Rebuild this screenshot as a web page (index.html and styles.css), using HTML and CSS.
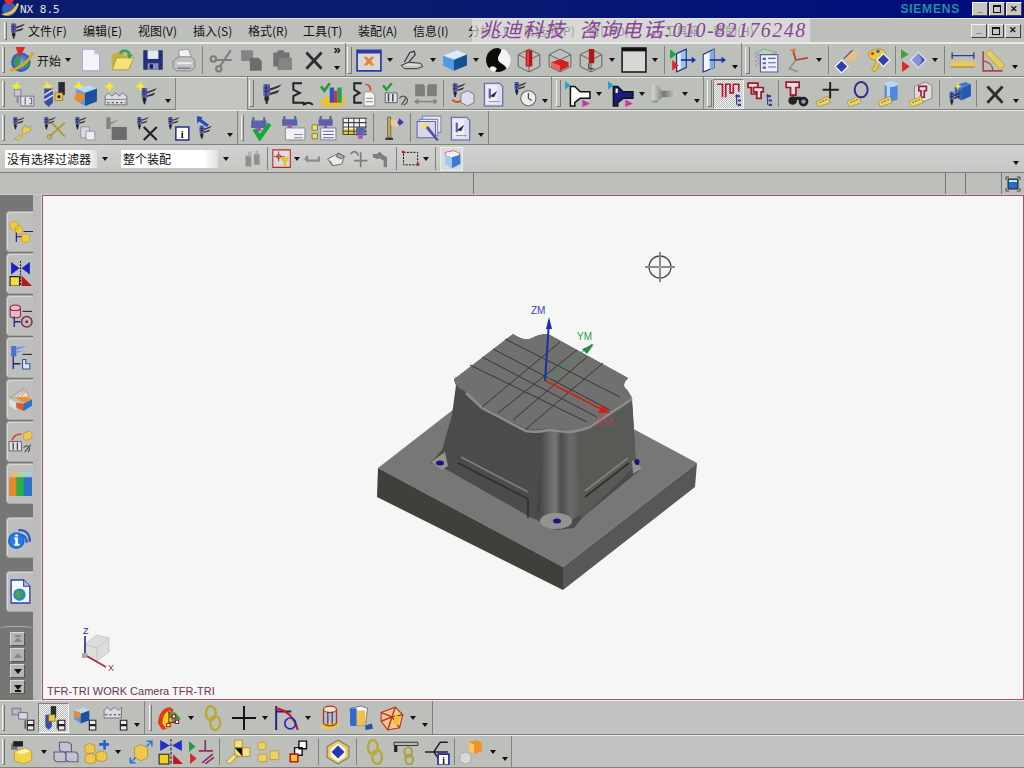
FILE: index.html
```html
<!DOCTYPE html>
<html lang="zh">
<head>
<meta charset="utf-8">
<title>NX 8.5</title>
<link rel="stylesheet" href="styles.css">
</head>
<body>
<svg class="defs" aria-hidden="true">
<defs>
<filter id="soft" x="-5%" y="-5%" width="110%" height="110%"><feGaussianBlur stdDeviation=".55"/></filter>
<linearGradient id="gCorner" x1="0" x2="1" y1="0" y2="0"><stop offset="0" stop-color="#3c3d3a"/><stop offset=".22" stop-color="#5d5e5b"/><stop offset=".42" stop-color="#777875"/><stop offset=".56" stop-color="#4c4d4a"/><stop offset=".78" stop-color="#6a6b68"/><stop offset="1" stop-color="#5a5b58"/></linearGradient>
<linearGradient id="gNav" x1="0" x2="1" y1="0" y2="0"><stop offset="0" stop-color="#d8d8d8"/><stop offset=".5" stop-color="#777"/><stop offset="1" stop-color="#ccc"/></linearGradient>
<radialGradient id="gGlobe"><stop offset="0" stop-color="#7ab0ee"/><stop offset="1" stop-color="#1e58b8"/></radialGradient>

<symbol id="tool" viewBox="0 0 24 24"><path fill="#5a62ac" d="M5 3h6v11H5z"/><path fill="#2c2f6a" d="M7 3h1v11H7zM5 6h6v1H5zM5 9h6v1H5z"/><path fill="#222" d="M6 14h4v4H6zM7 18h2v3H7z"/><path fill="#333" d="M11 7l11-4-3 3-8 3zM11 11l9-3-2 3-7 2z"/></symbol>
<symbol id="star" viewBox="0 0 24 24"><path fill="#f2ea3c" d="M6 0l1.500 3.500L11 5 7.500 6.500 6 10 4.500 6.500 1 5l3.500-1.500z"/></symbol>

<symbol id="start" viewBox="0 0 24 24"><circle cx="11" cy="14" r="9" fill="url(#gGlobe)"/><path fill="#3f9a3e" d="M5 11l5-2 1 4-3 5-3-3zM14 15l4-2 1 3-3 4z"/><path fill="none" stroke="#e8a020" stroke-width="2.500" d="M1 21C6 22 19 14 22 5"/><path fill="#e02a2a" d="M6 0h9l-5 10z"/></symbol>
<symbol id="new" viewBox="0 0 24 24"><path fill="#f4f2fb" stroke="#a8a8d8" d="M4 2h11l5 5v15H4z"/><path fill="#c8c8ea" d="M15 2l5 5h-5z"/></symbol>
<symbol id="open" viewBox="0 0 24 24"><path fill="#c8b040" d="M2 8l5-3h7v3l6 1v11H3z"/><path fill="#f4e27a" stroke="#a49030" stroke-width=".7" d="M3 21l4-11h16l-5 11z"/><path fill="none" stroke="#3ea24a" stroke-width="2.500" d="M10 6c3-4 8-3 9 1"/><path fill="#3ea24a" d="M16 7h6l-3 4z"/></symbol>
<symbol id="save" viewBox="0 0 24 24"><path fill="#24307e" d="M3 3h18v18H3z"/><path fill="#e8e8f0" d="M7 3h10v8H7z"/><path fill="#8890b0" d="M7 15h10v6H7z"/><path fill="#111a60" d="M9 16h3v4H9z"/></symbol>
<symbol id="print" viewBox="0 0 24 24"><path fill="#f2f2f2" stroke="#888" stroke-width=".7" d="M7 3l9-1 3 8H8z"/><path fill="#c0c0c4" stroke="#777" stroke-width=".7" d="M2 13l5-4h12l3 4v6l-4 3H5l-3-3z"/><path fill="#eee" d="M6 16h12l2-2H5z"/><path fill="#666" d="M6 19h12v1H6z"/></symbol>
<symbol id="cut" viewBox="0 0 24 24"><g fill="none" stroke="#7d7d7d" stroke-width="2"><circle cx="5" cy="11" r="2.500"/><circle cx="10" cy="20" r="2.500"/><path d="M7 12l15 0M11 18L21 3"/></g></symbol>
<symbol id="copy" viewBox="0 0 24 24"><path fill="#848484" d="M2 3h11v7h-2v3H2z"/><path fill="#6c6c6c" d="M10 10h8l3 3v9H10z"/></symbol>
<symbol id="paste" viewBox="0 0 24 24"><path fill="#727272" d="M3 5h4V3h6v2h5v5h2v11H7v-3H3z"/><path fill="#848484" d="M8 10h12v11H8z"/></symbol>
<symbol id="x" viewBox="0 0 24 24"><path fill="none" stroke="#2e2e2e" stroke-width="2.600" d="M5 5l14 15M19 5L5 20"/></symbol>
<symbol id="fit" viewBox="0 0 24 24"><path fill="#d8d8d4" stroke="#2a3ca8" stroke-width="1.600" d="M1 3h22v19H1z"/><path fill="#2a3ca8" d="M1 3h22v3H1z"/><path fill="#e6823a" d="M7 9l3 0 2 2 2-2h3l-3 4 3 4h-3l-2-2-2 2H7l3-4z"/></symbol>
<symbol id="pan" viewBox="0 0 24 24"><path fill="#c4c4c4" stroke="#333" stroke-width=".9" d="M2 17l7-3 11 1 2 3-5 2H5z"/><path fill="none" stroke="#333" stroke-width="1.100" d="M5 14L10 5l4-1 1 3-6 7"/><path fill="#f0f0f0" d="M6 16h12v1H6z"/></symbol>
<symbol id="cube" viewBox="0 0 24 24"><path fill="#d8ecfb" d="M1 8l13-5 9 4-12 4z"/><path fill="#4d9ae6" d="M1 8l10 4v10L1 17z"/><path fill="#15508f" d="M11 12l12-5v10l-12 5z"/></symbol>
<symbol id="disc" viewBox="0 0 24 24"><circle cx="12" cy="12" r="11" fill="#0c0c0c"/><path fill="#f4f4f4" d="M12 1a11 11 0 0 1 8 19c-2-5-8-5-8-9 0-4 3-5 3-9zM4 20c2-4 5-2 7 0l-2 3c-2-.5-4-1.500-5-3z"/></symbol>
<symbol id="wire" viewBox="0 0 24 24"><g fill="none" stroke="#555" stroke-width=".8"><path d="M2 7l10-5 10 5v11l-10 5-10-5z"/><path d="M2 7l10 5 10-5M12 12v11"/></g></symbol>
<symbol id="w1" viewBox="0 0 24 24"><use href="#wire"/><path fill="#b01818" d="M9 3h6v15h-6z"/><path fill="#e84040" d="M10 4h2v13h-2z"/></symbol>
<symbol id="w2" viewBox="0 0 24 24"><use href="#wire"/><path fill="#d42020" d="M4 14l8-3 8 3v4l-8 4-8-4z"/><path fill="#f06060" d="M4 14l8 3v5l-8-4z"/></symbol>
<symbol id="w3" viewBox="0 0 24 24"><use href="#wire"/><path fill="#b01818" d="M10 2h5v13h-5z"/><path fill="none" stroke="#333" d="M10 15v5h5"/></symbol>
<symbol id="bgr" viewBox="0 0 24 24"><path fill="#d8d8d4" stroke="#111" stroke-width="1.400" d="M1 1h22v22H1z"/><path fill="#111" d="M1 1h22v3H1z"/></symbol>
<symbol id="vA" viewBox="0 0 24 24"><path fill="#9cc4f0" stroke="#1a2c80" d="M6 6l9-4v17l-9 4z"/><path fill="#e4effb" d="M7 7l3-1.500V20l-3 1.500z"/><path fill="#26a040" d="M0 2l6 5-6 4z"/><path fill="#d82a2a" d="M2 12l6 5-6 5z"/><path fill="none" stroke="#1a2cb0" stroke-width="1.500" d="M10 12h11"/><path fill="#1a2cb0" d="M20 9l4 3-4 3z"/></symbol>
<symbol id="vB" viewBox="0 0 24 24"><path fill="#f2f6fc" stroke="#1a2c80" d="M2 7l10-5v17L2 23z"/><path fill="#7cb0ea" d="M8 5l4-3v17l-4 2z"/><path fill="none" stroke="#1a2cb0" stroke-width="1.500" d="M8 12h12"/><path fill="#1a2cb0" d="M19 9l4 3-4 3z"/></symbol>
<symbol id="layer" viewBox="0 0 24 24"><path fill="#b4d8b0" stroke="#889" stroke-width=".6" d="M1 6l8-4 12 3-9 3z"/><path fill="#d4d4e0" stroke="#889" stroke-width=".6" d="M1 9l4-2v3zM1 13l4-2v3zM1 17l4-2v3z"/><path fill="#eef0f8" stroke="#5c5ca8" d="M6 7h16v16H6z"/><path fill="#5c5ca8" d="M8 10h3v2H8zM13 10h7v1h-7zM8 14h3v2H8zM13 14h7v1h-7zM8 18h3v2H8zM13 18h7v1h-7z"/></symbol>
<symbol id="wcs" viewBox="0 0 24 24"><g fill="none" stroke-width="1.600"><path stroke="#8a9a8c" d="M10 12L4 20l8 3"/><path stroke="#c23a2a" d="M10 12L7 2M10 12l11-2"/></g><path fill="#e08030" d="M4 3l6-2-1 4z"/></symbol>
<symbol id="dHand" viewBox="0 0 24 24"><path fill="#3040b0" stroke="#fff" d="M7 12l6 6-6 6-6-6z"/><path fill="#e8c080" d="M9 11l8-8 5 2-1 6-7 3z"/><path fill="none" stroke="#5050a0" d="M9 11l8-8"/></symbol>
<symbol id="dPal" viewBox="0 0 24 24"><path fill="#e8c840" stroke="#a88820" stroke-width=".7" d="M3 6c3-5 14-6 16-1 1 3-4 2-5 4-1 3 0 7-3 12l-3 2-2-3 3-2 1-6c-3 1-7-2-7-6z"/><circle cx="7" cy="6" r="1.500" fill="#d83030"/><circle cx="12" cy="4" r="1.500" fill="#3050d0"/><path fill="#3040b0" stroke="#fff" d="M17 6l6 6-6 6-6-6z"/></symbol>
<symbol id="dTri" viewBox="0 0 24 24"><path fill="#3ca23c" d="M0 2l7 5-7 4z"/><path fill="#d82a2a" d="M1 13l7 5-7 5z"/><path fill="#3a4cb8" stroke="#eef" d="M16 5l7 7-7 7-7-7z"/><path fill="#d0d8f8" d="M16 5l3.500 7L16 19l-7-7z" opacity=".5"/></symbol>
<symbol id="rule" viewBox="0 0 24 24"><path fill="#e8c860" d="M1 13h22v6H1z"/><path fill="#a08428" d="M1 18h22v1H1z"/><path stroke="#304090" stroke-width="1.300" d="M2 8h20M2 5v6M22 5v6"/></symbol>
<symbol id="prot" viewBox="0 0 24 24"><path fill="none" stroke="#a84848" stroke-width="1.500" d="M2 4v18h18"/><path fill="none" stroke="#a84848" d="M2 13a9 9 0 0 1 9 9"/><path fill="#e4cc60" stroke="#a89030" stroke-width=".6" d="M8 2l14 15-4 4L4 6z"/></symbol>

<symbol id="n1" viewBox="0 0 24 24"><use href="#star"/><path fill="#c8c8d4" stroke="#778" stroke-width=".7" d="M4 8h6v6H4z"/><path fill="#e4e4ec" stroke="#667" stroke-width=".8" d="M10 14h12v9H10z"/><path fill="none" stroke="#667" d="M14 15v7M18 16h2v5h-2"/><path fill="#8888a4" d="M6 14h2v6H6z"/></symbol>
<symbol id="n2" viewBox="0 0 24 24"><use href="#star"/><path fill="#3c4ca8" d="M3 7h8v13l-4 4-4-4z"/><path stroke="#dde" stroke-width="1.500" d="M3 18l8-5M3 13l8-5"/><path fill="#2a2a30" d="M16 1h6v12h-6z"/><path fill="#e8c848" stroke="#807020" stroke-width=".6" d="M13 11h7v7h-7z"/><circle cx="16.500" cy="14.500" r="1.500" fill="#222"/></symbol>
<symbol id="n3" viewBox="0 0 24 24"><use href="#star"/><path fill="#bcd8f4" d="M4 7l12-3 7 3-12 3z"/><path fill="#5a98e0" d="M4 7l8 4v12l-8-5z"/><path fill="#1a50a0" d="M12 11l11-4v12l-11 4z"/><circle cx="7" cy="15" r="4.500" fill="#ee8a2a"/></symbol>
<symbol id="n4" viewBox="0 0 24 24"><use href="#star"/><path fill="#dcdcdc" stroke="#667" stroke-width=".8" d="M2 14l3-3 3 3 4-3 3 3 3-3 4 3v8H2z"/><path stroke="#889" d="M2 17h20"/><path stroke="#335" stroke-dasharray="2 2" d="M4 20h17"/></symbol>
<symbol id="n5" viewBox="0 0 24 24"><use href="#star"/><use href="#tool" x="3" y="4" width="20" height="20"/></symbol>

<symbol id="seq" viewBox="0 0 24 24"><path fill="none" stroke="#222" stroke-width="1.800" d="M12 2H4v6l6 3-6 3v6h9"/><path fill="none" stroke="#222" stroke-width="1.800" d="M14 22a5 5 0 0 1 8 0"/><path fill="#222" d="M12 19l4 1-3 3z"/></symbol>
<symbol id="chk" viewBox="0 0 24 24"><path fill="#ecc030" d="M1 17l8-4h10l4 3v5l-6 3H6l-5-3z"/><path fill="#3050c8" d="M9 6h4v14H9z"/><path fill="#d03040" d="M13 9h3v11h-3z"/><path fill="#26a060" d="M16 6h4v14h-4z"/><path fill="none" stroke="#1ea030" stroke-width="2.500" d="M1 5l3 4 5-7"/></symbol>
<symbol id="seqDoc" viewBox="0 0 24 24"><path fill="none" stroke="#222" stroke-width="1.800" d="M10 2H3v6l5 3-5 3v6h7"/><path fill="#f4f4f4" stroke="#888" stroke-width=".8" d="M12 10h7l3 3v10H12z"/><path stroke="#999" d="M14 16h6M14 19h6"/><path fill="none" stroke="#d84a2a" stroke-width="1.600" d="M13 3c4 0 5 3 5 6"/></symbol>
<symbol id="chk2" viewBox="0 0 24 24"><path fill="none" stroke="#1ea030" stroke-width="2.200" d="M1 4l3 4 5-6"/><path fill="#e0e4f0" stroke="#555" stroke-width=".8" d="M3 11h11v9H3z"/><path stroke="#345" stroke-width="1.400" d="M6 12v7M10 12v7"/><path fill="none" stroke="#555" stroke-width="1.200" d="M16 16a4 4 0 1 1 4 6M18 22l4-6"/></symbol>
<symbol id="book" viewBox="0 0 24 24"><path fill="#7e7e7e" d="M2 3h8l1 2v9H2zM13 5l1-2h8v11h-9z"/><path fill="none" stroke="#848484" stroke-width="1.500" d="M2 19h19"/><path fill="#848484" d="M19 16l4 3-4 3zM5 16l-4 3 4 3z"/></symbol>
<symbol id="reTool" viewBox="0 0 24 24"><use href="#tool" width="17" height="17"/><path fill="#dde" stroke="#666" stroke-width=".7" d="M11 12l6-3 6 3v8l-6 3-6-3z"/><path fill="none" stroke="#d84a2a" stroke-width="1.800" d="M3 17c2 3 6 3 8 1"/></symbol>
<symbol id="rep" viewBox="0 0 24 24"><path fill="#dcdcf0" stroke="#5c5ca8" d="M4 2h14l3 3v18H4z"/><path fill="#eeeef8" d="M6 4h10v17H6z"/><path fill="#5c5ca8" d="M8 7h2v9H8z"/><path fill="#2a2a30" d="M9 14l7-5-3 6z"/><path stroke="#999" d="M8 19h10"/></symbol>
<symbol id="clock" viewBox="0 0 24 24"><use href="#tool" width="16" height="16" y="-1"/><circle cx="16" cy="16" r="7" fill="#ececec" stroke="#666"/><path fill="none" stroke="#333" d="M16 11v5l3 2"/></symbol>
<symbol id="millA" viewBox="0 0 24 24"><path fill="#fff" stroke="#111" stroke-width="1.400" d="M5 5h4l5 5h9v6h-9l-5 4v3H5z"/><path fill="#2aa0d0" d="M0 0l5 4-5 4z"/><path fill="#c838a8" d="M16 17l7 4-7 3z"/></symbol>
<symbol id="millB" viewBox="0 0 24 24"><path fill="#1a1c80" stroke="#111" stroke-width="1.400" d="M5 5h4l5 5h9v6h-9l-5 4v3H5z"/><path fill="#fff" d="M7 7h2v4H7z"/><path fill="#2aa0d0" d="M0 0l5 4-5 4z"/><path fill="#c838a8" d="M16 17l7 4-7 3z"/></symbol>
<symbol id="nozzle" viewBox="0 0 24 24"><path fill="url(#gNav)" d="M1 4h5l4 5h13v6H10l-4 5H1z"/><path fill="#3ca040" d="M1 18h5v2H1z" opacity=".6"/></symbol>
<symbol id="prog" viewBox="0 0 24 24"><path fill="none" stroke="#b01830" stroke-width="1.500" d="M1 3h5v12M9 15V3h4v8h3V3h5v7"/><path fill="none" stroke="#303890" d="M19 12v10"/><path fill="#303890" d="M18 13h4v2h-4zM20 17h3v2h-3zM20 21h3v2h-3z"/></symbol>
<symbol id="prog2" viewBox="0 0 24 24"><path fill="#e4e4e4" stroke="#a01830" stroke-width="1.600" d="M1 2h9v4H8v6H4V6H1z"/><path fill="#e4e4e4" stroke="#a01830" stroke-width="1.600" d="M6 6h9v4h-2v6H9v-6H6z"/><path fill="none" stroke="#303890" d="M19 12v10"/><path fill="#303890" d="M18 13h4v2h-4zM20 17h3v2h-3zM20 21h3v2h-3z"/></symbol>
<symbol id="bino" viewBox="0 0 24 24"><path fill="#e0dede" stroke="#a01830" stroke-width="1.600" d="M2 1h12v5h-3v7H6V6H2z"/><circle cx="8" cy="18" r="4" fill="#222"/><circle cx="18" cy="19" r="4.500" fill="#222"/><circle cx="18" cy="19" r="2" fill="#8aa0d0"/><path stroke="#222" stroke-width="3" d="M10 16l6 0"/></symbol>
<symbol id="tag" viewBox="0 0 24 24"><path fill="#e8d470" stroke="#a89030" stroke-width=".7" d="M1 19l11-5 2 6-11 4z"/><path fill="none" stroke="#807020" stroke-dasharray="2 1" d="M4 20l7-3"/></symbol>
<symbol id="tPlus" viewBox="0 0 24 24"><use href="#tag"/><path stroke="#222" stroke-width="1.800" d="M14 1v15M7 8h15"/></symbol>
<symbol id="tRing" viewBox="0 0 24 24"><use href="#tag"/><ellipse cx="14" cy="8" rx="6" ry="7" fill="none" stroke="#2a2c90" stroke-width="1.800"/></symbol>
<symbol id="tCyl" viewBox="0 0 24 24"><path fill="#4c88e0" d="M7 3h12v14l-6 2-6-2z"/><ellipse cx="13" cy="3" rx="6" ry="2.500" fill="#b8d8f8"/><path fill="#bcd4f4" d="M9 5h3v12H9z"/><use href="#tag"/></symbol>
<symbol id="tBlk" viewBox="0 0 24 24"><path fill="#ddd" stroke="#777" stroke-width=".7" d="M6 5l10-4 6 3v12l-10 4-6-4z"/><path fill="#e4e4e4" stroke="#a01830" stroke-width="1.500" d="M10 5h7v4h-2v6h-3V9h-2z"/><use href="#tag"/></symbol>
<symbol id="auto" viewBox="0 0 24 24"><path fill="#4478d8" d="M9 4l9-3 5 2-9 4z"/><path fill="#2858b0" d="M14 7l9-4v11l-9 4z"/><path fill="#3868c0" d="M8 4l6 3v11l-6-4z"/><path fill="#f0e040" d="M11 1l1 3 3 1-3 1-1 3-1-3-3-1 3-1z"/><use href="#tool" y="8" width="16" height="16"/></symbol>

<symbol id="pWrench" viewBox="0 0 24 24"><use href="#tool" width="15" height="15"/><path fill="#e8d040" stroke="#888" stroke-width=".6" d="M4 22l8-5-1-3 3-5 2 3 3-2 0 5-5 2-6 6z"/></symbol>
<symbol id="pCut" viewBox="0 0 24 24"><use href="#tool" width="15" height="15"/><path fill="none" stroke="#b09830" stroke-width="1.700" d="M22 7L8 20M10 7l12 13"/><circle cx="8" cy="20" r="2" fill="none" stroke="#b09830"/></symbol>
<symbol id="pCopy" viewBox="0 0 24 24"><use href="#tool" width="15" height="15"/><path fill="#d8d8e4" stroke="#889" stroke-width=".7" d="M8 11h8v10H8z"/><path fill="#eee" stroke="#889" stroke-width=".7" d="M13 15h8v8h-8z"/></symbol>
<symbol id="pPaste" viewBox="0 0 24 24"><path fill="#848484" d="M3 2h4v11H3zM7 7l8-3-8 5z"/><path fill="#6c6c6c" d="M8 11h14v12H8z"/></symbol>
<symbol id="pDel" viewBox="0 0 24 24"><use href="#tool" width="15" height="15"/><path fill="none" stroke="#222" stroke-width="2" d="M9 11l12 12M21 11L9 23"/></symbol>
<symbol id="pInfo" viewBox="0 0 24 24"><use href="#tool" width="15" height="15"/><path fill="#fff" stroke="#22308a" stroke-width="1.400" d="M10 11h12v12H10z"/><text x="16" y="21.500" text-anchor="middle" font-family="Liberation Serif, serif" font-weight="700" font-size="10" fill="#111">i</text></symbol>
<symbol id="pMove" viewBox="0 0 24 24"><use href="#tool" y="8" width="16" height="16"/><path fill="#2848c8" d="M1 1l5 1-1 2 7 5-2 2-7-5-2 2z"/></symbol>
<symbol id="vCheck" viewBox="0 0 24 24"><path fill="#5a62ac" d="M3 2h2v3h8V2h2v3h1v7H2V5h1z"/><path fill="#c040c0" d="M7 12h4v3H7z"/><path fill="none" stroke="#18a83a" stroke-width="4" d="M5 13l5 8 9-13"/></symbol>
<symbol id="vDoc" viewBox="0 0 24 24"><path fill="#5a62ac" d="M3 1h2v3h8V1h2v3h1v6H2V4h1z"/><path fill="#c040c0" d="M7 10h4v3H7z"/><path fill="#f0f0f8" stroke="#777" stroke-width=".7" d="M5 12h18v11H5z"/><path stroke="#888" d="M13 18h8M13 21h8"/></symbol>
<symbol id="vTree" viewBox="0 0 24 24"><path fill="#5a62ac" d="M8 1h2v3h7V1h2v3h1v6H7V4h1z"/><path fill="#c040c0" d="M12 10h3v2h-3z"/><path fill="#f0e050" stroke="#555" stroke-width=".6" d="M1 9h5v5H1zM1 17h5v5H1z"/><path fill="#f2f2f8" stroke="#667" stroke-width=".7" d="M9 12h14v11H9z"/><path stroke="#5a62ac" d="M11 15h10M11 18h10M11 21h10"/></symbol>
<symbol id="vGrid" viewBox="0 0 24 24"><path fill="#f6f6f6" d="M1 3h22v15H1z"/><path fill="#e8d030" d="M1 13h20v5H1z"/><path stroke="#444" d="M1 3h22M1 7h22M1 11h22M1 15h22M1 18h22M1 3v15M6 3v15M11 3v15M16 3v15M22 3v15"/><path fill="#5a62ac" d="M13 11h8v8h-8z"/><path fill="#c040c0" d="M15 19h4v3h-4z"/></symbol>
<symbol id="flag" viewBox="0 0 24 24"><path fill="#c8a850" stroke="#333" stroke-width=".5" d="M7 2h3v19H7z"/><path fill="#333" d="M5 21h7v2H5z"/><path fill="#e8c8a0" d="M10 4l7 1 2 4-6 2-3-2z"/><path fill="#3040b0" d="M18 3l4 4-4 3-2-3z"/></symbol>
<symbol id="wiz" viewBox="0 0 24 24"><path fill="#e8e8f4" stroke="#8888b8" d="M6 1h17v15H6z"/><path fill="#e8e8f4" stroke="#8888b8" d="M3 4h17v15H3z"/><path fill="#d8d8ec" stroke="#6868a8" d="M1 6h17v15H1z"/><path fill="#5050a0" d="M9 12l2-2 10 13-2 1z"/><path fill="#f4ea30" d="M8 6l1 3 3 1-3 1-1 3-1-3-3-1 3-1z"/></symbol>

<symbol id="sFil" viewBox="0 0 24 24"><path fill="#909090" d="M3 8h7v13H3zM13 6h7v13h-7z"/><path fill="#aeaeae" d="M6 3h4v6H6zM15 2h3v5h-3z"/></symbol>
<symbol id="sTar" viewBox="0 0 24 24"><path fill="#fff" fill-opacity=".3" stroke="#b82a2a" stroke-width="1.300" d="M1 1h21v21H1z"/><path stroke="#b82a2a" d="M8 3v12M2 9h13"/><circle cx="8" cy="9" r="2.500" fill="none" stroke="#b82a2a"/><path fill="#e4c030" d="M9 10h12l-4 6v5l-3 1v-6z"/></symbol>
<symbol id="sUndo" viewBox="0 0 24 24"><path fill="none" stroke="#8c8c8c" stroke-width="2.600" d="M5 8v6h14v-5"/><path fill="#8c8c8c" d="M1 12l5-4v8z"/></symbol>
<symbol id="sBox" viewBox="0 0 24 24"><path fill="#ececec" stroke="#555" d="M2 12L15 5l7 4-3 9-11 2z"/><path fill="#aaa" stroke="#555" d="M15 5l7 4-4 3-6-3zM5 14l3 6"/></symbol>
<symbol id="sAng" viewBox="0 0 24 24"><path fill="none" stroke="#7c7c7c" stroke-width="2" d="M2 6c3-4 8-4 9 2M14 4v18M6 14h16"/></symbol>
<symbol id="sFold" viewBox="0 0 24 24"><path fill="#7e7e7e" d="M1 6h5l3-3 4 4 5 3v12h-4v-8l-5-3-3 1-5-2z"/></symbol>
<symbol id="sSel" viewBox="0 0 24 24"><path fill="none" stroke="#111" stroke-dasharray="2.500 1.500" stroke-width="1.200" d="M3 4h17v15H3z"/><path fill="#c81818" d="M1 2h3v3H1zM19 17h3v3h-3z"/></symbol>
<symbol id="sCube" viewBox="0 0 24 24"><path fill="#f2f2f6" stroke="#c03a3a" stroke-width=".8" d="M4 4l10-2 7 3v3l-9 3-8-3z"/><path fill="#3a7ad0" d="M12 10l10-3v11l-10 5z"/><path fill="#a0c8ee" d="M4 7l8 3v13l-8-5z"/></symbol>

<symbol id="b1" viewBox="0 0 24 24"><path fill="#b8b8c8" stroke="#667" stroke-width=".8" d="M2 3h8v6H2z"/><path fill="#d8d8e0" stroke="#667" stroke-width=".8" d="M8 7h8v6H8z"/><path fill="none" stroke="#333" d="M14 14v8"/><path fill="#eee" stroke="#222" d="M16 14h6v4h-6zM16 19h6v4h-6z"/></symbol>
<symbol id="b2" viewBox="0 0 24 24"><path fill="#3c4ca8" d="M4 9h6v11l-3 3-3-3z"/><path fill="#2a2a30" d="M9 1h5v11H9z"/><path fill="#e8c848" stroke="#807020" stroke-width=".6" d="M7 9h6v6H7z"/><path fill="none" stroke="#333" d="M15 14v8"/><path fill="#eee" stroke="#222" d="M16 14h6v4h-6zM16 19h6v4h-6z"/></symbol>
<symbol id="b3" viewBox="0 0 24 24"><path fill="#bcd8f4" d="M2 5l9-3 5 3-9 3z"/><path fill="#5a98e0" d="M2 5l6 3v9l-6-4z"/><path fill="#1a50a0" d="M8 8l8-3v9l-8 3z"/><circle cx="5" cy="9" r="3" fill="#ee8a2a"/><path fill="#eee" stroke="#222" d="M16 14h6v4h-6zM16 19h6v4h-6z"/></symbol>
<symbol id="b4" viewBox="0 0 24 24"><path fill="#dcdcdc" stroke="#667" stroke-width=".8" d="M1 5l3-3 3 3 4-3 3 3 3-3v10H1z"/><path stroke="#335" stroke-dasharray="2 2" d="M2 9h14"/><path fill="#eee" stroke="#222" d="M16 14h6v4h-6zM16 19h6v4h-6z"/></symbol>
<symbol id="heat" viewBox="0 0 24 24"><path fill="#e03820" d="M1 17C1 8 6 2 12 2l3 2-2 16-8 3z"/><path fill="#f0d020" d="M5 17C5 10 8 6 12 5l3 6-3 11-4-1z"/><path fill="#3aa040" d="M10 6l7 1 5 6-7 4z"/><path fill="none" stroke="#a01830" d="M11 6v13M11 11h8M11 16h6"/><path fill="#fff" stroke="#a01830" d="M14 9h3v3h-3zM17 14h3v3h-3zM9 17h3v3H9z"/></symbol>
<symbol id="link" viewBox="0 0 24 24"><g fill="none" stroke="#b8aa30" stroke-width="2.200"><ellipse cx="10" cy="7.500" rx="4.500" ry="6.500"/><ellipse cx="14" cy="16.500" rx="4.500" ry="6.500"/></g></symbol>
<symbol id="plus" viewBox="0 0 24 24"><path stroke="#111" stroke-width="1.800" d="M12 1v22M1 12h22"/></symbol>
<symbol id="curve" viewBox="0 0 24 24"><path fill="none" stroke="#222280" stroke-width="1.800" d="M2 1v22M2 6h14"/><path fill="none" stroke="#c81818" stroke-width="2" d="M1 3c8 1 17 6 21 20"/><circle cx="15" cy="17" r="5" fill="none" stroke="#2828c0" stroke-width="1.600"/></symbol>
<symbol id="cyl" viewBox="0 0 24 24"><path fill="#e8cc50" d="M1 20l12-5 10 3-12 5z"/><ellipse cx="12" cy="4" rx="6" ry="3" fill="#f0e8c8" stroke="#b83030"/><path fill="none" stroke="#b83030" stroke-width="1.200" d="M6 4v13M18 4v13M6 17c3 3 9 3 12 0"/><path stroke="#2828a0" d="M10 6v12M14 6v12"/></symbol>
<symbol id="blkFlag" viewBox="0 0 24 24"><path fill="#fff" stroke="#558" stroke-width=".7" d="M2 3l10-2 6 2-2 16H3z"/><path fill="#f0c050" d="M8 5h8v14H8z"/><path fill="#2a6ad0" d="M2 3h6v16H2z"/><path fill="#2a50a0" d="M16 19l6-2 1 5-7 1z"/></symbol>
<symbol id="mesh" viewBox="0 0 24 24"><path fill="#f0c890" stroke="#c03020" d="M2 7l13-5 7 7-3 12-11 2-6-8z"/><path fill="none" stroke="#c03020" stroke-width="1.300" d="M2 7l10 4 3-9M12 11l7 10M12 11l-4 12M2 15l10-4M22 9l-10 2"/><path fill="#e8c820" d="M15 9l5 2-3 8-4-3z"/></symbol>

<symbol id="f1" viewBox="0 0 24 24"><path fill="#777" d="M1 4h6v6H1z"/><path fill="#222" d="M3 2h9v5H3z"/><path fill="#f2d448" stroke="#a89030" stroke-width=".6" d="M4 12l10-4 6 3v9l-8 3-8-3z"/><path fill="#fff4b0" d="M5 12l9-3 5 2-8 3z"/></symbol>
<symbol id="f2" viewBox="0 0 24 24"><g fill="#c4c4cc" stroke="#5a5a90"><path d="M6 3h8l3 2v7H8l-2-2z"/><path d="M1 12h9l2 2v7H3l-2-2z"/><path d="M12 12h9l2 2v7h-9l-2-2z"/></g></symbol>
<symbol id="f3" viewBox="0 0 24 24"><path fill="#f0c850" stroke="#a08820" stroke-width=".6" d="M1 6l4-2 5 2v6l-5 2-4-2zM1 15l5-2 5 2v6l-5 2-5-2zM11 13l5-2 5 2v6l-5 2-5-2z"/><path stroke="#2060d8" stroke-width="2.400" d="M19 1v9M14 5h9"/></symbol>
<symbol id="f4" viewBox="0 0 24 24"><path fill="#f0c850" stroke="#a08820" stroke-width=".6" d="M7 8l5-3 7 3v9l-6 3-6-3z"/><path fill="none" stroke="#2a78d0" stroke-width="1.400" d="M18 2h5v5M3 17v5h5M23 2l-5 5M3 22l5-5"/></symbol>
<symbol id="f5" viewBox="0 0 24 24"><path stroke="#222" stroke-dasharray="2.500 1.500" d="M12 0v24"/><path fill="#2030c8" d="M2 1l9 5-9 5zM22 1l-9 5 9 5z"/><path fill="#f0d020" stroke="#222" d="M1 14h9v9H1z"/><path fill="#c01818" d="M14 14l9 9h-9z"/></symbol>
<symbol id="f6" viewBox="0 0 24 24"><path fill="#20a040" d="M0 2l6 5-6 5z"/><path fill="#d82a2a" d="M1 13l6 5-6 5z"/><path stroke="#883060" stroke-width="1.500" d="M15 1v10M9 11h13M12 22l10-8M15 23l8-6"/></symbol>
<symbol id="f7" viewBox="0 0 24 24"><path fill="#f2e08a" stroke="#a08820" stroke-width=".7" d="M9 1h7v7h7v8H9zM1 21l8-8 3 3-8 7z"/><path stroke="#a08820" d="M9 8h7v8"/></symbol>
<symbol id="f8" viewBox="0 0 24 24"><path fill="#f0d060" stroke="#a89030" stroke-width=".6" d="M2 3h7v7H2zM13 11h8v8h-8zM2 14h8v7H2z"/></symbol>
<symbol id="f9" viewBox="0 0 24 24"><path fill="#fff" stroke="#111" stroke-width="1.300" d="M11 2h7v7h-7zM7 8h7v7H7z"/><path fill="#f0d020" stroke="#c01818" stroke-width="1.500" d="M3 14h7v7H3z"/></symbol>
<symbol id="f10" viewBox="0 0 24 24"><path fill="#e8cc50" stroke="#777" d="M12 1l10 6v10l-10 6-10-6V7z"/><path fill="#f4f4f4" d="M12 4l7 5v7l-7 5-7-5V9z"/><path fill="#2838a8" d="M12 6l6 6-6 6-6-6z"/></symbol>
<symbol id="f12" viewBox="0 0 24 24"><path fill="#bbb" stroke="#222" stroke-width=".8" d="M1 3h22v3H1z"/><path fill="#222" d="M1 6h3v6H1z"/><g fill="none" stroke="#a8a030" stroke-width="1.800"><ellipse cx="14" cy="12" rx="3.500" ry="4.500"/><ellipse cx="15" cy="19" rx="3.500" ry="4.500"/></g></symbol>
<symbol id="f13" viewBox="0 0 24 24"><path fill="none" stroke="#222" stroke-width="1.300" d="M1 12h8l6-9h7M9 12h13M9 12l5 7"/><path fill="#fff" stroke="#1a2aa0" stroke-width="1.500" d="M13 14h10v10H13z"/><text x="18" y="23" text-anchor="middle" font-family="Liberation Serif, serif" font-weight="700" font-size="9" fill="#111">i</text></symbol>
<symbol id="f14" viewBox="0 0 24 24"><path fill="#f09028" d="M9 3l7-2 5 2v8l-7 3-5-3z"/><path fill="#f8c870" d="M9 3l5 2v9l-5-3z"/><path fill="#d8d8d8" stroke="#999" stroke-width=".5" d="M1 14l5-2 5 2v7l-5 2-5-2z"/></symbol>

<symbol id="lt1" viewBox="0 0 24 24"><path fill="#eccc40" stroke="#a89030" stroke-width=".5" d="M2 4l4-2 4 2v5l-4 2-4-2zM7 8l4-2 3 2v5l-3 2-4-2zM13 16l4-2 4 2v5l-4 2-4-2z"/><path fill="none" stroke="#1a2080" stroke-width="1.100" d="M8 13v9M8 17h5M15 12h9"/></symbol>
<symbol id="lt2" viewBox="0 0 24 24"><path fill="#1a20c8" d="M3 1l8 6-8 6zM21 1l-8 6 8 6z"/><path stroke="#222" stroke-dasharray="2 1" d="M12 0v24"/><path fill="#f0e040" stroke="#222" d="M2 15h9v9H2z"/><path fill="#b81818" d="M13 14l10 10H13z"/></symbol>
<symbol id="lt3" viewBox="0 0 24 24"><path fill="#e8b8c8" stroke="#8a2a4a" d="M2 5c0-4 10-4 10 0v7c0 3-10 3-10 0z"/><path fill="none" stroke="#8a2a4a" d="M2 5c0 3 10 3 10 0"/><path stroke="#222" d="M14 8h9"/><path fill="none" stroke="#1a2080" stroke-width="1.200" d="M6 13v10M6 18h6"/><circle cx="18" cy="18" r="5" fill="none" stroke="#8a2a4a" stroke-width="1.500"/><circle cx="18" cy="18" r="1.500" fill="#8a2a4a"/></symbol>
<symbol id="lt4" viewBox="0 0 24 24"><path fill="#4a74c8" d="M3 1h5v10H3z"/><path fill="#7098e0" d="M8 2l10-1-10 4zM8 6l8-1-8 3z"/><path stroke="#222" d="M14 9h9"/><path fill="none" stroke="#1a2080" stroke-width="1.200" d="M5 11v12M5 18h7"/><path fill="#dce8f8" stroke="#2a50a8" d="M14 23v-9h3v4h4v5z"/></symbol>
<symbol id="lt5" viewBox="0 0 24 24"><path fill="#f0e0b8" stroke="#a07838" stroke-width=".5" d="M2 10l14-9 4 9z"/><path stroke="#a8a0d0" d="M5 9l10-7M9 9l7-6M13 9l4-5"/><path fill="#ddd" d="M1 11l7 4v7l-7-4z"/><path fill="#f09030" d="M8 11l9-2 6 3-8 3z"/><path fill="#d85a30" d="M8 15l7 1 8-4v4l-8 7-7-3z"/><path fill="#2a70d0" d="M15 16l8-4v6l-8 5z"/></symbol>
<symbol id="lt6" viewBox="0 0 24 24"><path fill="#f4c850" stroke="#a87830" stroke-width=".5" d="M15 4l6-2 2 2v5l-6 2-2-2z"/><path fill="none" stroke="#d84a2a" stroke-width="1.600" d="M4 11c1-5 5-6 9-6"/><path fill="#e0e0e4" stroke="#555" stroke-width=".8" d="M1 12h12v9H1z"/><path stroke="#345" stroke-width="1.200" d="M5 13v7M9 13v7"/><path fill="none" stroke="#555" stroke-width="1.200" d="M15 18a3 3 0 1 1 4 4M16 22l6-7"/></symbol>
<symbol id="lt7" viewBox="0 0 24 24"><path fill="#e8882a" d="M1 6h8v18H1z"/><path fill="#f8b860" d="M2 4h7l2-3H4z"/><path fill="#28b040" d="M8 6h8v18H8z"/><path fill="#90e890" d="M9 4h7l2-3h-7z"/><path fill="#2a70c8" d="M15 6h8v18h-8z"/><path fill="#a0d0f8" d="M16 4h7V1h-5z"/></symbol>
<symbol id="lt8" viewBox="0 0 24 24"><path fill="none" stroke="#2a5ac0" stroke-width="2.200" d="M10 5c7-1 11 4 11 11M10 9c5 0 8 3 8 8M11 13c2 0 3 1 3 3"/><circle cx="8" cy="15" r="8" fill="#1868d8"/><circle cx="8" cy="15" r="6.500" fill="#2a7ae4"/><path fill="#fff" d="M7 9h2.500v2H7zM6 12h3.500v6H11v2H6v-2h1v-4H6z"/></symbol>
<symbol id="lt9" viewBox="0 0 24 24"><path fill="#f4f8ff" stroke="#2a40b0" stroke-width="1.300" d="M3 1h12l6 6v16H3z"/><path fill="#a8c0ec" stroke="#2a40b0" d="M15 1v6h6"/><circle cx="11" cy="15" r="6" fill="#2a8ac0"/><path fill="#48a848" d="M8 11l5 1 1 3-4 4-3-3z"/></symbol>
</defs>
</svg>

<div class="app">
  <header class="title">
    <svg class="tlogo" viewBox="0 0 20 18"><circle cx="9" cy="9" r="7" fill="#2a62c8"/><path fill="#f4c040" d="M1 14c5 4 15 1 18-10l-2-1c-3 7-8 10-16 11z"/><path fill="#e02838" d="M4 0h10L9 7z"/></svg>
    <span class="tname">NX 8.5</span>
    <span class="siemens">SIEMENS</span>
    <div class="wbtns"><b class="wb">_</b><b class="wb"><i class="restore"></i></b><b class="wb">✕</b></div>
  </header>

  <nav class="menu">
    <span class="grip"></span>
    <svg class="mico"><use href="#tool"/></svg>
    <span class="mi">文件(F)</span><span class="mi">编辑(E)</span><span class="mi">视图(V)</span><span class="mi">插入(S)</span><span class="mi">格式(R)</span><span class="mi">工具(T)</span><span class="mi">装配(A)</span><span class="mi">信息(I)</span><span class="mi">分析(L)</span><span class="mi wide">首选项(P)</span><span class="mi mid">窗口(O)</span><span class="mi wide">GC工具箱</span><span class="mi">帮助(H)</span>
    <div class="wbtns in"><b class="wb">_</b><b class="wb"><i class="restore"></i></b><b class="wb">✕</b></div>
    <div class="wm">兆迪科技&nbsp;&nbsp;咨询电话:010-82176248</div>
  </nav>

  <div class="row h34">
    <span class="grip"></span>
    <div class="startb"><svg class="i"><use href="#start"/></svg><span>开始</span><u class="arr"></u></div>
    <a class="b"><svg class="i"><use href="#new"/></svg></a>
    <a class="b"><svg class="i"><use href="#open"/></svg></a>
    <a class="b"><svg class="i"><use href="#save"/></svg></a>
    <a class="b"><svg class="i"><use href="#print"/></svg></a>
    <span class="sep w6"></span>
    <a class="b"><svg class="i"><use href="#cut"/></svg></a>
    <a class="b"><svg class="i"><use href="#copy"/></svg></a>
    <a class="b"><svg class="i"><use href="#paste"/></svg></a>
    <a class="b"><svg class="i"><use href="#x"/></svg></a>
    <span class="ovf"><em>»</em><u class="arr"></u></span>
    <span class="brk w8"></span>
    <a class="b"><svg class="i"><use href="#fit"/></svg></a><a class="d"><u class="arr"></u></a>
    <a class="b"><svg class="i"><use href="#pan"/></svg></a><a class="d"><u class="arr"></u></a>
    <a class="b"><svg class="i"><use href="#cube"/></svg></a><a class="d"><u class="arr"></u></a>
    <a class="b"><svg class="i"><use href="#disc"/></svg></a>
    <a class="b"><svg class="i"><use href="#w1"/></svg></a>
    <a class="b"><svg class="i"><use href="#w2"/></svg></a>
    <a class="b"><svg class="i"><use href="#w3"/></svg></a><a class="d"><u class="arr"></u></a>
    <a class="b"><svg class="i"><use href="#bgr"/></svg></a><a class="d"><u class="arr"></u></a>
    <span class="sep w6"></span>
    <a class="b"><svg class="i"><use href="#vA"/></svg></a>
    <a class="b"><svg class="i"><use href="#vB"/></svg></a><a class="d low"><u class="arr"></u></a>
    <span class="brk w10"></span>
    <a class="b"><svg class="i"><use href="#layer"/></svg></a>
    <a class="b"><svg class="i"><use href="#wcs"/></svg></a><a class="d"><u class="arr"></u></a>
    <span class="sep w6"></span>
    <a class="b"><svg class="i"><use href="#dHand"/></svg></a>
    <a class="b"><svg class="i"><use href="#dPal"/></svg></a>
    <span class="sep w5"></span>
    <a class="b"><svg class="i"><use href="#dTri"/></svg></a><a class="d"><u class="arr"></u></a>
    <span class="sep w6"></span>
    <a class="b"><svg class="i"><use href="#rule"/></svg></a>
    <a class="b"><svg class="i"><use href="#prot"/></svg></a><a class="d low"><u class="arr"></u></a>
  </div>

  <div class="row h33">
    <div class="bar w176">
      <span class="grip"></span>
      <a class="b"><svg class="i"><use href="#n1"/></svg></a>
      <a class="b"><svg class="i"><use href="#n2"/></svg></a>
      <a class="b"><svg class="i"><use href="#n3"/></svg></a>
      <a class="b"><svg class="i"><use href="#n4"/></svg></a>
      <a class="b"><svg class="i"><use href="#n5"/></svg></a><a class="d low"><u class="arr"></u></a>
    </div>
    <span class="blank w67"></span>
    <span class="brk w8"></span>
    <a class="b"><svg class="i"><use href="#tool"/></svg></a>
    <a class="b"><svg class="i"><use href="#seq"/></svg></a>
    <a class="b"><svg class="i"><use href="#chk"/></svg></a>
    <a class="b"><svg class="i"><use href="#seqDoc"/></svg></a>
    <a class="b"><svg class="i"><use href="#chk2"/></svg></a>
    <a class="b"><svg class="i"><use href="#book"/></svg></a>
    <span class="sep w5"></span>
    <a class="b"><svg class="i"><use href="#reTool"/></svg></a>
    <a class="b"><svg class="i"><use href="#rep"/></svg></a>
    <a class="b"><svg class="i"><use href="#clock"/></svg></a><a class="d low"><u class="arr"></u></a>
    <span class="brk w11"></span>
    <a class="b"><svg class="i"><use href="#millA"/></svg></a><a class="d"><u class="arr"></u></a>
    <a class="b"><svg class="i"><use href="#millB"/></svg></a><a class="d"><u class="arr"></u></a>
    <a class="b"><svg class="i"><use href="#nozzle"/></svg></a><a class="d"><u class="arr"></u></a><a class="d low"><u class="arr"></u></a>
    <span class="brk w10"></span>
    <a class="b on"><svg class="i"><use href="#prog"/></svg></a>
    <a class="b"><svg class="i"><use href="#prog2"/></svg></a>
    <span class="sep w6"></span>
    <a class="b"><svg class="i"><use href="#bino"/></svg></a>
    <a class="b"><svg class="i"><use href="#tPlus"/></svg></a>
    <a class="b"><svg class="i"><use href="#tRing"/></svg></a>
    <a class="b"><svg class="i"><use href="#tCyl"/></svg></a>
    <a class="b"><svg class="i"><use href="#tBlk"/></svg></a>
    <span class="sep w7"></span>
    <a class="b"><svg class="i"><use href="#auto"/></svg></a>
    <span class="sep w5"></span>
    <a class="b"><svg class="i"><use href="#x"/></svg></a><a class="d low"><u class="arr"></u></a>
  </div>

  <div class="row h35">
    <div class="bar w238">
      <span class="grip"></span>
      <a class="b"><svg class="i"><use href="#pWrench"/></svg></a>
      <a class="b"><svg class="i"><use href="#pCut"/></svg></a>
      <a class="b"><svg class="i"><use href="#pCopy"/></svg></a>
      <a class="b"><svg class="i"><use href="#pPaste"/></svg></a>
      <a class="b"><svg class="i"><use href="#pDel"/></svg></a>
      <a class="b"><svg class="i"><use href="#pInfo"/></svg></a>
      <a class="b"><svg class="i"><use href="#pMove"/></svg></a><a class="d low"><u class="arr"></u></a>
    </div>
    <div class="bar w251">
      <span class="grip"></span>
      <a class="b"><svg class="i"><use href="#vCheck"/></svg></a>
      <a class="b"><svg class="i"><use href="#vDoc"/></svg></a>
      <a class="b"><svg class="i"><use href="#vTree"/></svg></a>
      <a class="b"><svg class="i"><use href="#vGrid"/></svg></a>
      <span class="sep w7"></span>
      <a class="b"><svg class="i"><use href="#flag"/></svg></a>
      <span class="sep w5"></span>
      <a class="b"><svg class="i"><use href="#wiz"/></svg></a>
      <a class="b"><svg class="i"><use href="#rep"/></svg></a><a class="d low"><u class="arr"></u></a>
    </div>
  </div>

  <div class="selbar">
    <div class="combo c1"><span class="ctext">没有选择过滤器</span><u class="arr"></u></div>
    <div class="combo c2"><span class="ctext">整个装配</span><u class="arr"></u></div>
    <a class="s"><svg class="si"><use href="#sFil"/></svg></a>
    <span class="sep w6"></span>
    <a class="s"><svg class="si"><use href="#sTar"/></svg></a><a class="sd"><u class="arr"></u></a>
    <a class="s"><svg class="si"><use href="#sUndo"/></svg></a>
    <a class="s"><svg class="si"><use href="#sBox"/></svg></a>
    <a class="s"><svg class="si"><use href="#sAng"/></svg></a>
    <a class="s"><svg class="si"><use href="#sFold"/></svg></a>
    <span class="sep w6"></span>
    <a class="s"><svg class="si"><use href="#sSel"/></svg></a><a class="sd"><u class="arr"></u></a>
    <span class="sep w10"></span>
    <a class="s on"><svg class="si"><use href="#sCube"/></svg></a>
    <span class="grow"></span>
    <u class="arr endarr"></u>
  </div>

  <div class="status">
    <span class="cell c474"></span><span class="cell c472"></span><span class="cell c20"></span><span class="cell c36"></span>
    <svg class="fs" viewBox="0 0 16 16"><path fill="none" stroke="#444" d="M1 4V1h3M12 1h3v3M15 12v3h-3M4 15H1v-3"/><path fill="#2a6ac8" stroke="#222" d="M3 3h10v10H3z"/><path fill="#cfe2f6" d="M4 4h8v2H4z"/></svg>
  </div>

  <main class="work">
    <aside class="rail">
      <div class="tabs">
        <div class="tab"><svg class="ti"><use href="#lt1"/></svg></div>
        <div class="tab"><svg class="ti"><use href="#lt2"/></svg></div>
        <div class="tab"><svg class="ti"><use href="#lt3"/></svg></div>
        <div class="tab"><svg class="ti"><use href="#lt4"/></svg></div>
        <div class="tab"><svg class="ti"><use href="#lt5"/></svg></div>
        <div class="tab"><svg class="ti"><use href="#lt6"/></svg></div>
        <div class="tab"><svg class="ti"><use href="#lt7"/></svg></div>
      </div>
      <div class="tabs second">
        <div class="tab"><svg class="ti"><use href="#lt8"/></svg></div>
        <div class="tab"><svg class="ti"><use href="#lt9"/></svg></div>
      </div>
      <div class="scroll">
        <span class="sb"><i class="tri up faint barT"></i></span>
        <span class="sb"><i class="tri up faint"></i></span>
        <span class="sb"><i class="tri dn"></i></span>
        <span class="sb"><i class="tri dn barB"></i></span>
      </div>
    </aside>
    <section class="view">
      <svg class="scene" viewBox="43 196 980 503">
        <g filter="url(#soft)">
        <!-- base plate -->
        <path fill="#777875" d="M378 468L512 364 697 463 563 567z"/>
        <path fill="#3d3f3a" d="M378 468L563 567 563 590 377 497z"/>
        <path fill="#575854" d="M563 567L697 463 695 487 563 590z"/>
        <!-- part silhouette -->
        <path fill="#4b4c48" d="M513 334Q525 342 532 338T548 334L628 378Q622 384 625 388Q632 392 633 415L636 465 640 470 583 517 574 528 556 530 541 522 530 517 442 467 430 463 442 450 452 415 456 385Q452 378 457 377z"/>
        <!-- right face -->
        <path fill="#595a56" d="M574 430L632 398 636 465 583 517 575 515z"/>
        <!-- corner -->
        <path fill="url(#gCorner)" d="M543 428L576 428 580 514 570 522 545 518 537 510z"/>
        <!-- top face -->
        <path fill="#70716e" d="M513 334Q525 342 532 338T548 334L628 378Q622 384 625 388L632 397Q625 405 615 411L590 425Q580 430 568 430L548 428Q536 431 526 429L482 407 466 392Q458 388 456 385Q452 378 457 377z"/>
        <!-- top fillet -->
        <path fill="none" stroke="#8d8e8b" stroke-width="2.500" d="M466 393L482 408 526 431Q536 433 548 430L568 432Q580 431 590 427L632 399"/>
        <!-- grid -->
        <g fill="none" stroke="#353634" stroke-width="1">
          <path d="M505 339L620 397M493 349L610 410M482 357L597 417M470 365L587 422"/>
          <path d="M482 407L560 342M498 413L577 350M513 420L587 357M526 429L603 363"/>
        </g>
        <!-- ribs -->
        <path fill="none" stroke="#7d7e7b" stroke-width="1.800" d="M461 457L528 492M585 491L628 458"/>
        <path fill="none" stroke="#2e2f2c" stroke-width="1.600" d="M458 463L528 499M528 499V518M585 497L629 463"/>
        <!-- feet -->
        <g fill="#93948f"><ellipse cx="556" cy="521" rx="16" ry="8"/><path d="M431 462l14-10 3 14-6 4z"/><path d="M632 460l10 8-9 6z"/></g>
        <g fill="#14147c"><ellipse cx="557" cy="521" rx="4" ry="2.500"/><ellipse cx="440" cy="463" rx="4" ry="2.500"/><ellipse cx="637" cy="462" rx="2.500" ry="3"/></g>
        </g>
        <!-- triad -->
        <path stroke="#1a2cb0" stroke-width="2" d="M545 381L549 322"/>
        <path fill="#1a2cb0" d="M549 317l3 12h-6z"/>
        <path stroke="#2c9a48" stroke-width="1" d="M546 381L592 344"/>
        <path fill="#2c8a48" d="M594 344l-7 10-5-5z"/>
        <path stroke="#d81c1c" stroke-width="1.800" d="M546 381L605 411"/>
        <path fill="#d81c1c" d="M610 413l-12 0 4-8z"/>
        <text class="lbl zm" x="531" y="314">ZM</text>
        <text class="lbl ym" x="577" y="340">YM</text>
        <text class="lbl xm" x="596" y="426">XM</text>
        <!-- cursor -->
        <g fill="none" stroke="#4a4a4a"><circle cx="660" cy="267" r="11" stroke-width="1.300"/><path stroke-width="2" d="M660 252v30M645 267h30"/></g>
        <path stroke="#eee" stroke-width=".8" d="M660 252v30M645 267h30"/>
        <!-- small triad -->
        <g class="ghost" stroke-width=".7"><path d="M85 644l12-9 12 3v14l-12 9-12-5z"/><path fill="none" d="M85 644l12 4 12-10M97 648v13"/></g>
        <path stroke="#1a2a90" stroke-width="1.600" d="M85 654V636"/>
        <path stroke="#b02238" stroke-width="1.500" d="M85 655L106 667"/>
        <path fill="#aaa" d="M82 653h5v5h-5z"/>
        <text class="mini zb" x="83" y="634">Z</text>
        <text class="mini xr" x="108" y="671">X</text>
        <text class="cam" x="47" y="695">TFR-TRI WORK Camera TFR-TRI</text>
      </svg>
    </section>
  </main>

  <div class="row h35 foot1">
    <div class="bar w145">
      <span class="grip"></span>
      <a class="b"><svg class="i"><use href="#b1"/></svg></a>
      <a class="b on"><svg class="i"><use href="#b2"/></svg></a>
      <a class="b"><svg class="i"><use href="#b3"/></svg></a>
      <a class="b"><svg class="i"><use href="#b4"/></svg></a><a class="d low"><u class="arr"></u></a>
    </div>
    <div class="bar w288">
      <span class="grip"></span>
      <a class="b"><svg class="i"><use href="#heat"/></svg></a><a class="d"><u class="arr"></u></a>
      <a class="b"><svg class="i"><use href="#link"/></svg></a>
      <a class="b"><svg class="i"><use href="#plus"/></svg></a><a class="d"><u class="arr"></u></a>
      <a class="b"><svg class="i"><use href="#curve"/></svg></a><a class="d"><u class="arr"></u></a>
      <a class="b"><svg class="i"><use href="#cyl"/></svg></a>
      <a class="b"><svg class="i"><use href="#blkFlag"/></svg></a>
      <a class="b"><svg class="i"><use href="#mesh"/></svg></a><a class="d"><u class="arr"></u></a><a class="d low"><u class="arr"></u></a>
    </div>
  </div>
  <div class="row h33 foot2">
    <div class="bar w512">
      <span class="grip"></span>
      <a class="b"><svg class="i"><use href="#f1"/></svg></a><a class="d"><u class="arr"></u></a>
      <a class="b"><svg class="i"><use href="#f2"/></svg></a>
      <a class="b"><svg class="i"><use href="#f3"/></svg></a><a class="d"><u class="arr"></u></a>
      <a class="b"><svg class="i"><use href="#f4"/></svg></a>
      <a class="b"><svg class="i"><use href="#f5"/></svg></a>
      <a class="b"><svg class="i"><use href="#f6"/></svg></a>
      <span class="sep w5"></span>
      <a class="b"><svg class="i"><use href="#f7"/></svg></a>
      <a class="b"><svg class="i"><use href="#f8"/></svg></a>
      <a class="b"><svg class="i"><use href="#f9"/></svg></a>
      <span class="sep w7"></span>
      <a class="b"><svg class="i"><use href="#f10"/></svg></a>
      <span class="sep w6"></span>
      <a class="b"><svg class="i"><use href="#link"/></svg></a>
      <a class="b"><svg class="i"><use href="#f12"/></svg></a>
      <a class="b"><svg class="i"><use href="#f13"/></svg></a>
      <span class="sep w4"></span>
      <a class="b"><svg class="i"><use href="#f14"/></svg></a><a class="d"><u class="arr"></u></a><a class="d low"><u class="arr"></u></a>
    </div>
  </div>
</div>
</body>
</html>
```

FILE: styles.css
```css
* { box-sizing: border-box; }
html, body { margin: 0; padding: 0; }
body {
  width: 1024px;
  height: 768px;
  overflow: hidden;
  background: #bdbfba;
  font-family: "Noto Sans CJK SC", "Liberation Sans", sans-serif;
  font-size: 12px;
  color: #111;
}
.defs { position: absolute; width: 0; height: 0; }
.app { display: flex; flex-direction: column; height: 768px; }

.title {
  height: 18px;
  display: flex;
  align-items: center;
  background: linear-gradient(90deg, #0a1c6c 0%, #0a1c70 40%, #000a7e 100%);
}
.tlogo { width: 20px; height: 18px; flex: none; }
.tname { color: #e4e4e4; font: 11px "DejaVu Sans Mono", "Liberation Mono", monospace; }
.siemens {
  margin-left: auto;
  margin-right: 12px;
  color: #1f8ea8;
  font: 700 12px "Liberation Sans", sans-serif;
  letter-spacing: .8px;
}
.wbtns { display: flex; gap: 1px; margin-right: 2px; }
.wbtns.in { margin-left: auto; margin-right: 3px; }
.wb {
  width: 16px;
  height: 14px;
  display: flex;
  align-items: center;
  justify-content: center;
  background: #c6c6c6;
  border: 1px solid;
  border-color: #f2f2f2 #404040 #404040 #f2f2f2;
  color: #111;
  font: 700 9px/1 "Liberation Sans", sans-serif;
}
.restore { display: block; width: 8px; height: 8px; border: 1px solid #111; border-top-width: 2px; background: #c6c6c6; }

.menu {
  height: 25px;
  display: flex;
  align-items: center;
  position: relative;
  background: #bdbfba;
  border-top: 1px solid #e6e6e2;
  border-bottom: 1px solid #e6e6e2;
  padding-left: 4px;
}
.menu .grip { height: 18px; margin-right: 0; margin-left: 0; }
.mico { width: 20px; height: 20px; flex: none; margin-right: 1px; }
.mi { width: 55px; flex: none; white-space: nowrap; font-size: 12px; }
.mi.wide { width: 65px; }
.mi.mid { width: 60px; }
.wm {
  position: absolute;
  left: 472px;
  top: -1px;
  width: 338px;
  height: 24px;
  padding-left: 8px;
  background: rgba(232, 232, 232, .62);
  color: #8a4496;
  font: italic 20px/24px "Liberation Serif", "Noto Sans CJK SC", serif;
  white-space: nowrap;
  letter-spacing: 1.450px;
}

.row {
  display: flex;
  align-items: center;
  flex: none;
  background: #bdbfba;
  border-top: 1px solid #ecece8;
  border-bottom: 1px solid #80827e;
}
.h33 { height: 33px; }
.h34 { height: 34px; }
.h35 { height: 35px; }
.bar {
  display: flex;
  align-items: center;
  align-self: stretch;
  flex: none;
  border-right: 1px solid #80827e;
}
.w145 { width: 145px; }
.w176 { width: 176px; }
.w238 { width: 238px; }
.w251 { width: 251px; }
.w288 { width: 288px; }
.w512 { width: 512px; }
.w251 .grip { margin-left: 3px; }
.w288 .grip { margin-left: 4px; }
.grip {
  display: block;
  flex: none;
  width: 3px;
  height: 26px;
  margin: 0 2px 0 2px;
  border-left: 1px solid #f2f2ee;
  border-right: 1px solid #777;
  border-bottom: 1px solid #777;
}
.b {
  flex: none;
  width: 31px;
  height: 30px;
  display: flex;
  align-items: center;
  justify-content: center;
}
.b.on {
  background: repeating-conic-gradient(#f2f2f2 0 25%, #bcbcbc 0 50%) 0 0 / 2px 2px;
  border: 1px solid;
  border-color: #808080 #f0f0f0 #f0f0f0 #808080;
}
.d {
  flex: none;
  width: 12px;
  height: 30px;
  display: flex;
  align-items: center;
  justify-content: center;
}
.d.low { align-items: flex-end; padding-bottom: 6px; }
.i { width: 26px; height: 26px; display: block; flex: none; filter: blur(.3px); }
.arr {
  display: block;
  width: 0;
  height: 0;
  text-decoration: none;
  border-left: 3.500px solid transparent;
  border-right: 3.500px solid transparent;
  border-top: 4px solid #111;
}
.sep {
  flex: none;
  align-self: stretch;
  position: relative;
  margin: 2px 0;
  background: linear-gradient(#80827e, #80827e) center / 1px 100% no-repeat;
}
.brk {
  flex: none;
  align-self: stretch;
  display: flex;
  align-items: center;
  justify-content: flex-end;
  background: linear-gradient(#80827e, #80827e) 0 0 / 1px 100% no-repeat;
  margin: -1px 0;
}
.brk::after {
  content: "";
  display: block;
  width: 3px;
  height: 26px;
  margin-right: 1px;
  border-left: 1px solid #f2f2ee;
  border-right: 1px solid #777;
  border-bottom: 1px solid #777;
}
.w4 { width: 4px; }
.w5 { width: 5px; }
.w6 { width: 6px; }
.w7 { width: 7px; }
.w8 { width: 8px; }
.w10 { width: 10px; }
.w11 { width: 11px; }
.blank { flex: none; align-self: stretch; background: #c3c4c0; margin-bottom: -1px; }
.w67 { width: 71px; }
.startb {
  flex: none;
  width: 68px;
  display: flex;
  align-items: center;
  padding-left: 2px;
  gap: 2px;
}
.startb span { font-size: 12px; }
.startb .arr { margin-left: 2px; }
.ovf {
  flex: none;
  width: 16px;
  height: 30px;
  display: flex;
  flex-direction: column;
  align-items: center;
  justify-content: space-between;
  padding-bottom: 5px;
}
.ovf em { font: 700 13px/10px "Liberation Sans", sans-serif; }

.selbar {
  height: 28px;
  flex: none;
  display: flex;
  align-items: center;
  padding-left: 5px;
  background: linear-gradient(#d2d3d1, #c6c7c4);
  border-bottom: 1px solid #7c7e7a;
}
.combo { display: flex; align-items: center; height: 18px; flex: none; }
.c1 { width: 108px; }
.c2 { width: 113px; margin-left: 8px; margin-right: 7px; }
.ctext { background: linear-gradient(90deg, #fff 85%, #dfdfdf); height: 18px; line-height: 17px; font-size: 12px; flex: 1; padding-left: 2px; white-space: nowrap; }
.combo .arr { margin: 0 5px; }
.s { flex: none; width: 23px; height: 24px; display: flex; align-items: center; justify-content: center; }
.s.on { background: #d8dadc; border: 1px solid #ecece8; }
.sd { flex: none; width: 8px; display: flex; justify-content: center; }
.si { width: 20px; height: 20px; display: block; filter: blur(.3px); }
.grow { flex: 1; }
.endarr { margin: 8px 5px 0 0; }

.status {
  height: 22px;
  flex: none;
  display: flex;
  align-items: stretch;
  background: #bcbeb9;
  border-bottom: 1px solid #dcc4cc;
  padding-right: 3px;
}
.cell { flex: none; border-right: 1px solid #777; }
.c474 { width: 474px; }
.c472 { width: 472px; }
.c20 { width: 20px; }
.c36 { width: 36px; }
.fs { width: 16px; height: 16px; margin: 3px 0 0 3px; flex: none; }

.work { flex: 1; min-height: 0; display: flex; }
.rail {
  width: 42px;
  flex: none;
  display: flex;
  flex-direction: column;
  background: linear-gradient(90deg, #767775 0 33px, #babbb8 33px 36px, #bcbdba 36px 41px, #d4d4d2 41px);
  padding-left: 6px;
  padding-top: 16px;
}
.tabs { display: flex; flex-direction: column; gap: 1px; }
.second { margin-top: 13px; gap: 13px; }
.tab {
  width: 27px;
  height: 41px;
  display: flex;
  align-items: center;
  justify-content: center;
  background: #bebfbc;
  border-radius: 4px 0 0 4px;
  border: 1px solid #a8a9a6;
  border-right: 0;
  box-shadow: inset 1px 1px 0 #d6d6d4;
}
.ti { width: 25px; height: 25px; display: block; flex: none; filter: blur(.3px); }
.scroll {
  margin-top: 20px;
  margin-left: 4px;
  width: 15px;
  display: flex;
  flex-direction: column;
  gap: 2px;
  position: relative;
}
.scroll::before {
  content: "";
  position: absolute;
  left: -10px;
  right: -8px;
  top: -6px;
  height: 3px;
  border-top: 1px solid #b8b8b6;
  border-radius: 50% 50% 0 0;
}
.sb {
  width: 15px;
  height: 14px;
  display: flex;
  align-items: center;
  justify-content: center;
  background: #b4b4b2;
  border: 1px solid;
  border-color: #d8d8d8 #555 #555 #d8d8d8;
}
.tri { display: block; width: 0; height: 0; border-left: 4px solid transparent; border-right: 4px solid transparent; }
.tri.up { border-bottom: 5px solid #111; }
.tri.dn { border-top: 5px solid #111; }
.tri.faint.up { border-bottom-color: #888; }
.barT { box-shadow: 0 -3px 0 -1px #888; }
.barB { box-shadow: 0 3px 0 -1px #111; }

.view {
  flex: 1;
  min-width: 0;
  background: #f6f7f5;
  border: 1px solid #a0526c;
}
.scene { display: block; width: 980px; height: 503px; }
.lbl { font: 10px "Liberation Sans", sans-serif; }
.zm { fill: #3046c0; }
.ym { fill: #2c9a50; }
.xm { fill: #d84050; opacity: .6; font-size: 12px; }
.mini { font: 9px "Liberation Sans", sans-serif; }
.zb { fill: #2030a0; }
.xr { fill: #a02848; }
.cam { font: 11px "Liberation Sans", sans-serif; fill: #6c3450; }
.ghost { fill: #dcdedc; stroke: #bbbcba; }

.foot1, .foot2 { background: #c2c3c0; }
.foot1 .bar, .foot2 .bar { background: #bdbfba; }
```
